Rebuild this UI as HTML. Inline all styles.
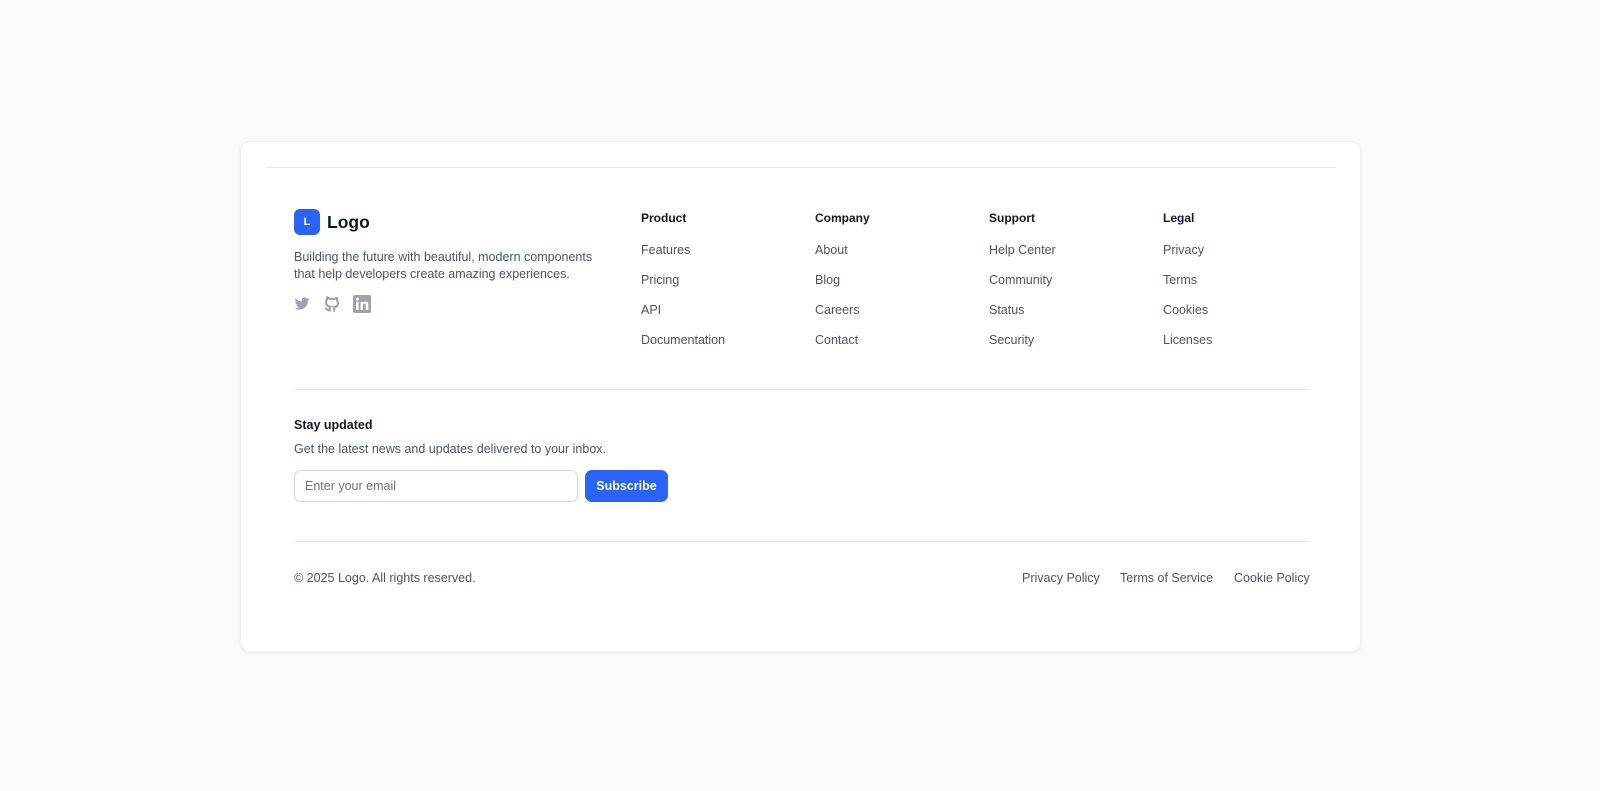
<!DOCTYPE html>
<html><head><meta charset="utf-8"><style>
*{box-sizing:border-box;margin:0;padding:0}
body{width:1600px;height:791px;background:#f9fafb;font-family:"Liberation Sans",sans-serif;position:relative;overflow:hidden}
.card{position:absolute;left:240px;top:141px;width:1121px;height:511px;background:#fff;border-radius:10px;box-shadow:0 1px 3px rgba(0,0,0,.08);border:1px solid #eef0f3}
.a{position:absolute;white-space:nowrap}
.h{font-size:12px;font-weight:bold;color:#111827}
.l{font-size:12.5px;color:#4b5563}
.hr{position:absolute;height:1px;background:#e5e7eb}
</style></head><body>
<div class="card"></div>
<div class="hr" style="left:266px;top:167px;width:1070px"></div>
<div class="a" style="left:294px;top:209px;width:26px;height:26px;background:#2b63f6;border-radius:6px;color:#fff;font-size:11px;font-weight:bold;text-align:center;line-height:26px">L</div>
<div class="a" style="left:327px;top:210px;font-size:17.5px;font-weight:bold;color:#111827;line-height:24px">Logo</div>
<div class="a l" style="left:294px;top:249px;line-height:17px">Building the future with beautiful, modern components<br>that help developers create amazing experiences.</div>
<svg class="a" style="left:294px;top:296px" width="16" height="16" viewBox="0 0 24 24" fill="#9ca3af"><path d="M23 4.6a9 9 0 0 1-2.6.7 4.5 4.5 0 0 0 2-2.5 9 9 0 0 1-2.9 1.1 4.5 4.5 0 0 0-7.7 4.1A12.8 12.8 0 0 1 2.5 3.3a4.5 4.5 0 0 0 1.4 6 4.5 4.5 0 0 1-2-.6 4.5 4.5 0 0 0 3.6 4.5 4.5 4.5 0 0 1-2 .1 4.5 4.5 0 0 0 4.2 3.1A9 9 0 0 1 1 18.3a12.8 12.8 0 0 0 19.7-11.4A9 9 0 0 0 23 4.6z"/></svg>
<svg class="a" style="left:323px;top:295px" width="18" height="18" viewBox="0 0 24 24" fill="none" stroke="#9ca3af" stroke-width="2.8"><path d="M9 20c-4 1-4-2-6-2.5M15 22v-3.5c0-1 .1-1.4-.5-2 2.8-.3 5.5-1.4 5.5-6a4.6 4.6 0 0 0-1.3-3.2 4.2 4.2 0 0 0-.1-3.2s-1.1-.3-3.5 1.3a12 12 0 0 0-6.2 0C6.5 2.8 5.4 3.1 5.4 3.1a4.2 4.2 0 0 0-.1 3.2A4.6 4.6 0 0 0 4 9.5c0 4.6 2.7 5.7 5.5 6-.6.6-.6 1.2-.5 2V22"/></svg>
<svg class="a" style="left:353px;top:295px" width="18" height="18" viewBox="0 0 24 24"><rect width="24" height="24" rx="2" fill="#9ca3af"/><rect x="4" y="9" width="3.5" height="11" fill="#fff"/><circle cx="5.75" cy="5.5" r="2" fill="#fff"/><path d="M10 9h3.3v1.6c.6-1 1.8-1.9 3.6-1.9 3 0 3.6 2 3.6 4.6V20H17v-5.8c0-1.4-.1-2.7-1.8-2.7s-1.9 1.3-1.9 2.6V20H10z" fill="#fff"/></svg>

<div class="a h" style="left:641px;top:211px">Product</div>
<div class="a l" style="left:641px;top:243px">Features</div>
<div class="a l" style="left:641px;top:273px">Pricing</div>
<div class="a l" style="left:641px;top:303px">API</div>
<div class="a l" style="left:641px;top:333px">Documentation</div>
<div class="a h" style="left:815px;top:211px">Company</div>
<div class="a l" style="left:815px;top:243px">About</div>
<div class="a l" style="left:815px;top:273px">Blog</div>
<div class="a l" style="left:815px;top:303px">Careers</div>
<div class="a l" style="left:815px;top:333px">Contact</div>
<div class="a h" style="left:989px;top:211px">Support</div>
<div class="a l" style="left:989px;top:243px">Help Center</div>
<div class="a l" style="left:989px;top:273px">Community</div>
<div class="a l" style="left:989px;top:303px">Status</div>
<div class="a l" style="left:989px;top:333px">Security</div>
<div class="a h" style="left:1163px;top:211px">Legal</div>
<div class="a l" style="left:1163px;top:243px">Privacy</div>
<div class="a l" style="left:1163px;top:273px">Terms</div>
<div class="a l" style="left:1163px;top:303px">Cookies</div>
<div class="a l" style="left:1163px;top:333px">Licenses</div>

<div class="hr" style="left:294px;top:389px;width:1015px"></div>
<div class="a h" style="left:294px;top:418px;font-size:12.5px">Stay updated</div>
<div class="a l" style="left:294px;top:442px">Get the latest news and updates delivered to your inbox.</div>
<div class="a" style="left:294px;top:470px;width:284px;height:32px;border:1px solid #d1d5db;border-radius:7px;font-size:12.5px;color:#6b7280;padding-left:10px;line-height:30px">Enter your email</div>
<div class="a" style="left:585px;top:470px;width:83px;height:32px;background:#2b63f6;border-radius:7px;color:#fff;font-size:12.5px;font-weight:bold;text-align:center;line-height:32px">Subscribe</div>

<div class="hr" style="left:294px;top:541px;width:1015px"></div>
<div class="a l" style="left:294px;top:571px">© 2025 Logo. All rights reserved.</div>
<div class="a l" style="left:1022px;top:571px">Privacy Policy</div>
<div class="a l" style="left:1120px;top:571px">Terms of Service</div>
<div class="a l" style="left:1234px;top:571px">Cookie Policy</div>
</body></html>
